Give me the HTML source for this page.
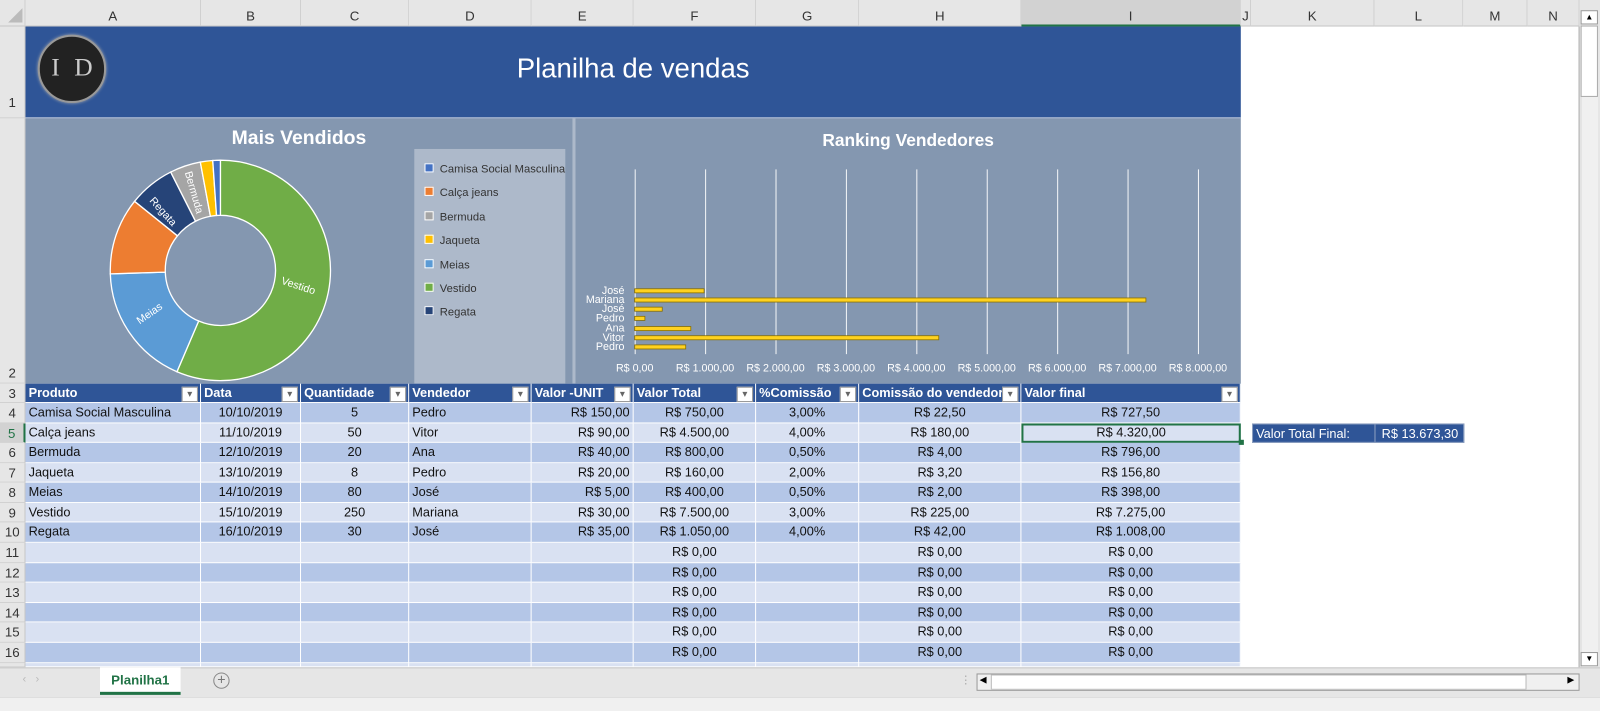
<!DOCTYPE html>
<html><head><meta charset="utf-8"><style>
*{box-sizing:border-box;margin:0;padding:0}
body{width:1600px;height:697px;overflow:hidden;background:#fff;font-family:"Liberation Sans",sans-serif;position:relative}
#w{position:absolute;left:0;top:0;width:1568px;height:683px;transform:scale(1.0204);transform-origin:0 0}
.abs{position:absolute}
.ch{position:absolute;top:0;height:26px;background:#e6e6e6;border-right:1px solid #d0d0d0;border-bottom:1px solid #c6c6c6;font-size:13px;color:#333;text-align:center;line-height:31px}
.rh{position:absolute;left:0;width:25px;background:#e6e6e6;border-bottom:1px solid #d0d0d0;border-right:1px solid #c6c6c6;font-size:13px;color:#333;text-align:center}
.row{position:absolute;left:25px;height:20px;display:flex;font-size:12.5px;color:#111}
.row div{height:100%;border-right:1px solid #fff;border-bottom:1px solid #fff;line-height:19px;padding:0 3px;white-space:nowrap;overflow:hidden}
.c{text-align:center}.r{text-align:right}
.hd div{background:#2f5597;color:#fff;font-weight:bold;position:relative}
.hd div::after{content:"▾";position:absolute;right:2px;top:3px;width:14px;height:13px;background:#fff;color:#666;font-size:10px;line-height:13px;text-align:center;border:1px solid #999;font-weight:normal}
.d{background:#b4c6e7}.l{background:#d9e1f2}
</style></head><body><div id="w">
<div class="ch" style="left:0;width:25px;background:#e6e6e6"><svg width="20" height="20" style="position:absolute;left:4px;top:4px"><path d="M18 4 L18 18 L4 18 Z" fill="#bbb"/></svg></div>
<div class="ch" style="left:25px;width:172px">A</div>
<div class="ch" style="left:197px;width:98px">B</div>
<div class="ch" style="left:295px;width:106px">C</div>
<div class="ch" style="left:401px;width:120px">D</div>
<div class="ch" style="left:521px;width:100px">E</div>
<div class="ch" style="left:621px;width:120px">F</div>
<div class="ch" style="left:741px;width:101px">G</div>
<div class="ch" style="left:842px;width:159px">H</div>
<div class="ch" style="left:1001px;width:215px;background:#d2d2d2;border-bottom:2px solid #217346">I</div>
<div class="ch" style="left:1216px;width:10px">J</div>
<div class="ch" style="left:1226px;width:121px">K</div>
<div class="ch" style="left:1347px;width:87px">L</div>
<div class="ch" style="left:1434px;width:63px">M</div>
<div class="ch" style="left:1497px;width:51px">N</div>
<div class="abs" style="left:1548px;top:0;width:52px;height:654px;background:#e6e6e6"></div>
<div class="abs" style="left:1549px;top:10px;width:17px;height:644px;background:#f0f0f0;border-left:1px solid #ddd"></div>
<div class="abs" style="left:1549px;top:10px;width:17px;height:14px;background:#fff;border:1px solid #999;font-size:8px;text-align:center;line-height:12px">▲</div>
<div class="abs" style="left:1549px;top:25px;width:17px;height:70px;background:#fff;border:1px solid #aaa"></div>
<div class="abs" style="left:1549px;top:639px;width:17px;height:14px;background:#fff;border:1px solid #999;font-size:8px;text-align:center;line-height:12px">▼</div>
<div class="abs" style="left:1547px;top:26px;width:1px;height:628px;background:#aaa"></div>

<div class="rh" style="top:26px;height:90px;line-height:150px">1</div>
<div class="rh" style="top:116px;height:260px;line-height:500px">2</div>
<div class="rh" style="top:376px;height:19px;line-height:19px">3</div>
<div class="rh" style="top:395px;height:20px;line-height:20px">4</div>
<div class="rh" style="top:415px;height:19px;line-height:19px;background:#d2d2d2;border-right:2px solid #217346;color:#217346">5</div>
<div class="rh" style="top:434px;height:20px;line-height:20px">6</div>
<div class="rh" style="top:454px;height:19px;line-height:19px">7</div>
<div class="rh" style="top:473px;height:20px;line-height:20px">8</div>
<div class="rh" style="top:493px;height:19px;line-height:19px">9</div>
<div class="rh" style="top:512px;height:20px;line-height:20px">10</div>
<div class="rh" style="top:532px;height:20px;line-height:20px">11</div>
<div class="rh" style="top:552px;height:19px;line-height:19px">12</div>
<div class="rh" style="top:571px;height:20px;line-height:20px">13</div>
<div class="rh" style="top:591px;height:19px;line-height:19px">14</div>
<div class="rh" style="top:610px;height:20px;line-height:20px">15</div>
<div class="rh" style="top:630px;height:20px;line-height:20px">16</div>
<div class="rh" style="top:650px;height:4px"></div>

<div class="abs" style="left:25px;top:26px;width:1191px;height:90px;background:#2f5597;border-bottom:1px solid #c9d3e3"></div>
<div class="abs" style="left:25px;top:52px;width:1191px;text-align:center;color:#fff;font-size:27px">Planilha de vendas</div>
<div class="abs" style="left:37px;top:34px;width:67px;height:67px;border-radius:50%;background:#222;border:2px solid #999;box-shadow:0 0 3px #aaa"></div>
<div class="abs" style="left:37px;top:53px;width:71px;text-align:center;color:#ccc;font-family:'Liberation Serif',serif;font-size:25px;letter-spacing:4px">I D</div>

<div class="abs" style="left:25px;top:116px;width:1191px;height:260px;background:#8497b0"></div>
<div class="abs" style="left:561px;top:116px;width:3px;height:260px;background:#adb9ca"></div>
<div class="abs" style="left:25px;top:125px;width:536px;text-align:center;color:#fff;font-weight:bold;font-size:19px">Mais Vendidos</div>
<div class="abs" style="left:564px;top:128px;width:652px;text-align:center;color:#fff;font-weight:bold;font-size:17px">Ranking Vendedores</div>
<div class="abs" style="left:406px;top:146px;width:148px;height:230px;background:#adb9ca"></div>
<div class="abs" style="left:416px;top:155px;font-size:11px;color:#333;line-height:23.4px">
<div><span style="display:inline-block;width:9px;height:9px;background:#4472c4;margin-right:6px;border:1px solid #fff"></span>Camisa Social Masculina</div>
<div><span style="display:inline-block;width:9px;height:9px;background:#ed7d31;margin-right:6px;border:1px solid #fff"></span>Calça jeans</div>
<div><span style="display:inline-block;width:9px;height:9px;background:#a5a5a5;margin-right:6px;border:1px solid #fff"></span>Bermuda</div>
<div><span style="display:inline-block;width:9px;height:9px;background:#ffc000;margin-right:6px;border:1px solid #fff"></span>Jaqueta</div>
<div><span style="display:inline-block;width:9px;height:9px;background:#5b9bd5;margin-right:6px;border:1px solid #fff"></span>Meias</div>
<div><span style="display:inline-block;width:9px;height:9px;background:#70ad47;margin-right:6px;border:1px solid #fff"></span>Vestido</div>
<div><span style="display:inline-block;width:9px;height:9px;background:#264478;margin-right:6px;border:1px solid #fff"></span>Regata</div>
</div>
<svg class="abs" style="left:0;top:0" width="1216" height="376">
<g stroke="#fff" stroke-width="1.3">
<path d="M216 157 A108 108 0 1 1 173.4 364.3 L194.7 314.6 A54 54 0 1 0 216 211 Z" fill="#70ad47"/>
<path d="M173.4 364.3 A108 108 0 0 1 108.1 268.4 L162 266.7 A54 54 0 0 0 194.7 314.6 Z" fill="#5b9bd5"/>
<path d="M108.1 268.4 A108 108 0 0 1 131.9 197.3 L173.9 231.1 A54 54 0 0 0 162 266.7 Z" fill="#ed7d31"/>
<path d="M131.9 197.3 A108 108 0 0 1 167.3 168.6 L191.6 216.8 A54 54 0 0 0 173.9 231.1 Z" fill="#264478"/>
<path d="M167.3 168.6 A108 108 0 0 1 196.3 158.8 L206.2 211.9 A54 54 0 0 0 191.6 216.8 Z" fill="#a5a5a5"/>
<path d="M196.3 158.8 A108 108 0 0 1 208.5 157.3 L212.2 211.1 A54 54 0 0 0 206.2 211.9 Z" fill="#ffc000"/>
<path d="M208.5 157.3 A108 108 0 0 1 216 157 L216 211 A54 54 0 0 0 212.2 211.1 Z" fill="#4472c4"/>
</g>
<g fill="#fff" font-family="Liberation Sans" font-size="10.5">
<text x="275" y="278" transform="rotate(18 275 278)">Vestido</text>
<text x="137" y="318" transform="rotate(-35 137 318)">Meias</text>
<text x="146" y="197" transform="rotate(48 146 197)">Regata</text>
<text x="181" y="169" transform="rotate(74 181 169)">Bermuda</text>
</g>
<g stroke="#fff" stroke-width="1" opacity="0.9">
<line x1="622.5" y1="166" x2="622.5" y2="347"/><line x1="691.5" y1="166" x2="691.5" y2="347"/><line x1="760.5" y1="166" x2="760.5" y2="347"/><line x1="829.5" y1="166" x2="829.5" y2="347"/><line x1="898.5" y1="166" x2="898.5" y2="347"/><line x1="967.5" y1="166" x2="967.5" y2="347"/><line x1="1036.5" y1="166" x2="1036.5" y2="347"/><line x1="1105.5" y1="166" x2="1105.5" y2="347"/><line x1="1174.5" y1="166" x2="1174.5" y2="347"/>
</g>
<g fill="#ffd21f" stroke="#8a7000" stroke-width="0.8">
<rect x="622" y="283" width="68" height="4"/>
<rect x="622" y="292" width="501" height="4"/>
<rect x="622" y="301" width="27" height="4"/>
<rect x="622" y="310" width="10" height="4"/>
<rect x="622" y="320" width="55" height="4"/>
<rect x="622" y="329" width="298" height="4"/>
<rect x="622" y="338" width="50" height="4"/>
</g>
<g fill="#fff" font-family="Liberation Sans" font-size="10.5" text-anchor="end">
<text x="612" y="288">José</text><text x="612" y="297">Mariana</text><text x="612" y="306">José</text><text x="612" y="315">Pedro</text><text x="612" y="325">Ana</text><text x="612" y="334">Vitor</text><text x="612" y="343">Pedro</text>
</g>
<g fill="#fff" font-family="Liberation Sans" font-size="10.5" text-anchor="middle">
<text x="622" y="364">R$ 0,00</text><text x="691" y="364">R$ 1.000,00</text><text x="760" y="364">R$ 2.000,00</text><text x="829" y="364">R$ 3.000,00</text><text x="898" y="364">R$ 4.000,00</text><text x="967" y="364">R$ 5.000,00</text><text x="1036" y="364">R$ 6.000,00</text><text x="1105" y="364">R$ 7.000,00</text><text x="1174" y="364">R$ 8.000,00</text>
</g>
</svg>

<div class="row hd" style="top:376px;height:19px"><div style="width:172px">Produto</div><div style="width:98px">Data</div><div style="width:106px">Quantidade</div><div style="width:120px">Vendedor</div><div style="width:100px">Valor -UNIT</div><div style="width:120px">Valor Total</div><div style="width:101px">%Comissão</div><div style="width:159px">Comissão do vendedor</div><div style="width:215px">Valor final</div></div>

<div class="row d" style="top:395px"><div style="width:172px">Camisa Social Masculina</div><div class="c" style="width:98px">10/10/2019</div><div class="c" style="width:106px">5</div><div style="width:120px">Pedro</div><div class="r" style="width:100px">R$ 150,00</div><div class="c" style="width:120px">R$ 750,00</div><div class="c" style="width:101px">3,00%</div><div class="c" style="width:159px">R$ 22,50</div><div class="c" style="width:215px">R$ 727,50</div></div>
<div class="row l" style="top:415px;height:19px"><div style="width:172px">Calça jeans</div><div class="c" style="width:98px">11/10/2019</div><div class="c" style="width:106px">50</div><div style="width:120px">Vitor</div><div class="r" style="width:100px">R$ 90,00</div><div class="c" style="width:120px">R$ 4.500,00</div><div class="c" style="width:101px">4,00%</div><div class="c" style="width:159px">R$ 180,00</div><div class="c" style="width:215px;border:2px solid #217346;line-height:15px">R$ 4.320,00</div></div>
<div class="row d" style="top:434px"><div style="width:172px">Bermuda</div><div class="c" style="width:98px">12/10/2019</div><div class="c" style="width:106px">20</div><div style="width:120px">Ana</div><div class="r" style="width:100px">R$ 40,00</div><div class="c" style="width:120px">R$ 800,00</div><div class="c" style="width:101px">0,50%</div><div class="c" style="width:159px">R$ 4,00</div><div class="c" style="width:215px">R$ 796,00</div></div>
<div class="row l" style="top:454px;height:19px"><div style="width:172px">Jaqueta</div><div class="c" style="width:98px">13/10/2019</div><div class="c" style="width:106px">8</div><div style="width:120px">Pedro</div><div class="r" style="width:100px">R$ 20,00</div><div class="c" style="width:120px">R$ 160,00</div><div class="c" style="width:101px">2,00%</div><div class="c" style="width:159px">R$ 3,20</div><div class="c" style="width:215px">R$ 156,80</div></div>
<div class="row d" style="top:473px"><div style="width:172px">Meias</div><div class="c" style="width:98px">14/10/2019</div><div class="c" style="width:106px">80</div><div style="width:120px">José</div><div class="r" style="width:100px">R$ 5,00</div><div class="c" style="width:120px">R$ 400,00</div><div class="c" style="width:101px">0,50%</div><div class="c" style="width:159px">R$ 2,00</div><div class="c" style="width:215px">R$ 398,00</div></div>
<div class="row l" style="top:493px;height:19px"><div style="width:172px">Vestido</div><div class="c" style="width:98px">15/10/2019</div><div class="c" style="width:106px">250</div><div style="width:120px">Mariana</div><div class="r" style="width:100px">R$ 30,00</div><div class="c" style="width:120px">R$ 7.500,00</div><div class="c" style="width:101px">3,00%</div><div class="c" style="width:159px">R$ 225,00</div><div class="c" style="width:215px">R$ 7.275,00</div></div>
<div class="row d" style="top:512px"><div style="width:172px">Regata</div><div class="c" style="width:98px">16/10/2019</div><div class="c" style="width:106px">30</div><div style="width:120px">José</div><div class="r" style="width:100px">R$ 35,00</div><div class="c" style="width:120px">R$ 1.050,00</div><div class="c" style="width:101px">4,00%</div><div class="c" style="width:159px">R$ 42,00</div><div class="c" style="width:215px">R$ 1.008,00</div></div>
<div class="row l" style="top:532px"><div style="width:172px"></div><div style="width:98px"></div><div style="width:106px"></div><div style="width:120px"></div><div style="width:100px"></div><div class="c" style="width:120px">R$ 0,00</div><div style="width:101px"></div><div class="c" style="width:159px">R$ 0,00</div><div class="c" style="width:215px">R$ 0,00</div></div>
<div class="row d" style="top:552px;height:19px"><div style="width:172px"></div><div style="width:98px"></div><div style="width:106px"></div><div style="width:120px"></div><div style="width:100px"></div><div class="c" style="width:120px">R$ 0,00</div><div style="width:101px"></div><div class="c" style="width:159px">R$ 0,00</div><div class="c" style="width:215px">R$ 0,00</div></div>
<div class="row l" style="top:571px"><div style="width:172px"></div><div style="width:98px"></div><div style="width:106px"></div><div style="width:120px"></div><div style="width:100px"></div><div class="c" style="width:120px">R$ 0,00</div><div style="width:101px"></div><div class="c" style="width:159px">R$ 0,00</div><div class="c" style="width:215px">R$ 0,00</div></div>
<div class="row d" style="top:591px;height:19px"><div style="width:172px"></div><div style="width:98px"></div><div style="width:106px"></div><div style="width:120px"></div><div style="width:100px"></div><div class="c" style="width:120px">R$ 0,00</div><div style="width:101px"></div><div class="c" style="width:159px">R$ 0,00</div><div class="c" style="width:215px">R$ 0,00</div></div>
<div class="row l" style="top:610px"><div style="width:172px"></div><div style="width:98px"></div><div style="width:106px"></div><div style="width:120px"></div><div style="width:100px"></div><div class="c" style="width:120px">R$ 0,00</div><div style="width:101px"></div><div class="c" style="width:159px">R$ 0,00</div><div class="c" style="width:215px">R$ 0,00</div></div>
<div class="row d" style="top:630px"><div style="width:172px"></div><div style="width:98px"></div><div style="width:106px"></div><div style="width:120px"></div><div style="width:100px"></div><div class="c" style="width:120px">R$ 0,00</div><div style="width:101px"></div><div class="c" style="width:159px">R$ 0,00</div><div class="c" style="width:215px">R$ 0,00</div></div>
<div class="row l" style="top:650px;height:4px"><div style="width:172px"></div><div style="width:98px"></div><div style="width:106px"></div><div style="width:120px"></div><div style="width:100px"></div><div style="width:120px"></div><div style="width:101px"></div><div style="width:159px"></div><div style="width:215px"></div></div>
<div class="abs" style="left:1214px;top:431px;width:5px;height:5px;background:#217346"></div>

<div class="abs" style="left:1227px;top:415px;width:208px;height:19px;background:#2f5597;color:#fff;font-size:12.5px;line-height:19px;border:1px solid #8ea0c0">
<span style="position:absolute;left:3px">Valor Total Final:</span>
<span style="position:absolute;left:119px;top:0;width:1px;height:17px;background:#8ea0c0"></span>
<span style="position:absolute;left:126px">R$ 13.673,30</span></div>

<div class="abs" style="left:0;top:654px;width:1600px;height:43px;background:#e6e6e6;border-top:1px solid #c6c6c6"></div>
<div class="abs" style="left:22px;top:660px;font-size:11px;color:#bbb">‹ &nbsp; ›</div>
<div class="abs" style="left:98px;top:654px;width:79px;height:27px;background:#fff;border-bottom:3px solid #217346;color:#217346;font-weight:bold;font-size:13px;text-align:center;line-height:25px">Planilha1</div>
<div class="abs" style="left:209px;top:659px;width:16px;height:16px;border:1px solid #888;border-radius:50%;color:#777;font-size:14px;line-height:13px;text-align:center">+</div>
<div class="abs" style="left:941px;top:660px;color:#aaa;font-size:11px">⋮</div>
<div class="abs" style="left:957px;top:660px;width:591px;height:17px;background:#f0f0f0;border:1px solid #999"></div>
<div class="abs" style="left:971px;top:661px;width:525px;height:15px;background:#fff;border:1px solid #bbb"></div>
<div class="abs" style="left:960px;top:661px;font-size:9px">◀</div>
<div class="abs" style="left:1536px;top:661px;font-size:9px">▶</div>
<div class="abs" style="left:0;top:683px;width:1600px;height:14px;background:#f0f0f0;border-top:1px solid #ddd"></div>
</div></body></html>
